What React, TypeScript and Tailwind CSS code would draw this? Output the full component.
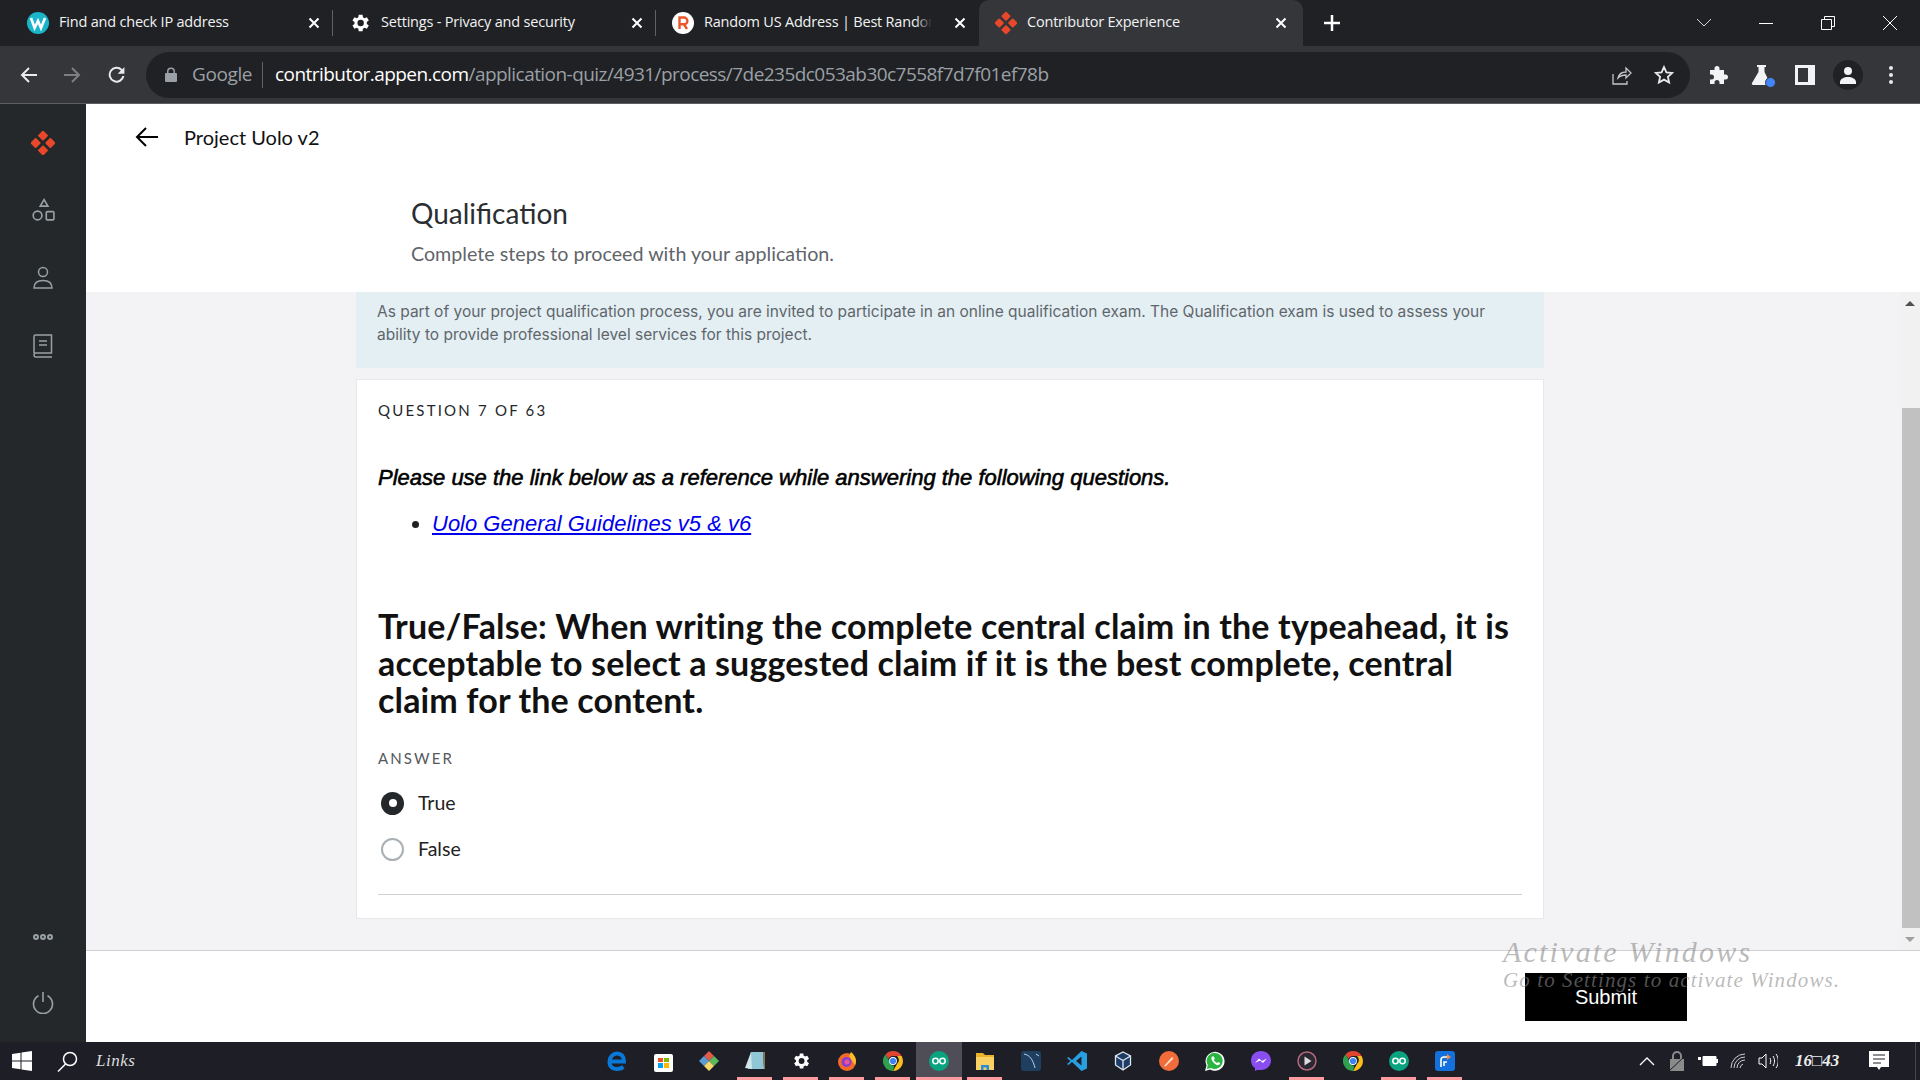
import React from "react";

const Diamond = ({ size = 20 }: { size?: number }) => (
  <svg width={size} height={size} viewBox="0 0 24 24" fill="#e8472a">
    <rect x="8.2" y="0.8" width="7.6" height="7.6" rx="1" transform="rotate(45 12 4.6)" />
    <rect x="8.2" y="15.6" width="7.6" height="7.6" rx="1" transform="rotate(45 12 19.4)" />
    <rect x="0.8" y="8.2" width="7.6" height="7.6" rx="1" transform="rotate(45 4.6 12)" />
    <rect x="15.6" y="8.2" width="7.6" height="7.6" rx="1" transform="rotate(45 19.4 12)" />
  </svg>
);

const TabClose = () => (
  <svg width="12" height="12" viewBox="0 0 12 12" stroke="#fff" strokeWidth="2" fill="none">
    <path d="M1.5 1.5l9 9M10.5 1.5l-9 9" />
  </svg>
);

const Gear = ({ size = 20, color = "#fff" }: { size?: number; color?: string }) => (
  <svg width={size} height={size} viewBox="0 0 24 24" fill={color}>
    <path d="M19.4 13a7.6 7.6 0 0 0 0-2l2.2-1.7-2.1-3.6-2.6 1a7.6 7.6 0 0 0-1.7-1L14.8 3h-4.2l-.4 2.7a7.6 7.6 0 0 0-1.7 1l-2.6-1-2.1 3.6L6 11a7.6 7.6 0 0 0 0 2l-2.2 1.7 2.1 3.6 2.6-1a7.6 7.6 0 0 0 1.7 1l.4 2.7h4.2l.4-2.7a7.6 7.6 0 0 0 1.7-1l2.6 1 2.1-3.6zM12.7 15.5a3.5 3.5 0 1 1 0-7 3.5 3.5 0 0 1 0 7z" />
  </svg>
);

const FavW = () => (
  <svg width="22" height="22" viewBox="0 0 22 22">
    <circle cx="11" cy="11" r="11" fill="#19b5c9" />
    <path d="M4 6l3.6 10 3.4-7 3 7L18 6" stroke="#fff" strokeWidth="2.6" fill="none" />
  </svg>
);

const FavR = () => (
  <svg width="22" height="22" viewBox="0 0 22 22">
    <circle cx="11" cy="11" r="11" fill="#fff" />
    <path d="M7.5 17V5.5h4.5a3.4 3.4 0 0 1 0 6.8H7.500M12 12.300L15 17" stroke="#e8562a" strokeWidth="2.400" fill="none" />
  </svg>
);

function Tab({ icon, title, active, sep, w, fade }: { icon: React.ReactNode; title: string; active?: boolean; sep?: boolean; w: number; fade?: boolean }) {
  return (
    <div className={active ? "relative h-[46px] flex items-center bg-[#35363a] rounded-t-[10px] pl-[16px] pr-[16px] shrink-0" : "relative h-[46px] flex items-center pl-[16px] pr-[13px] shrink-0"} style={{ width: w }}>
      <div className="w-[22px] h-[22px] flex items-center justify-center shrink-0">{icon}</div>
      <div className="ml-[10px] flex-1 min-w-0 overflow-hidden whitespace-nowrap text-[14.500px] leading-[20px] mb-[2px] tracking-[-0.2px] text-[#f1f3f4] font-['Open_Sans',sans-serif]">
        {title}
      </div>
      {fade ? <div className="absolute right-[30px] top-[10px] w-[34px] h-[26px] bg-gradient-to-r from-transparent via-[#202124] to-[#202124]" /> : null}
      <div className="ml-[8px] w-[12px] shrink-0"><TabClose /></div>
      {sep ? <div className="absolute right-0 top-[10px] h-[26px] w-px bg-[#5f6368]" /> : null}
    </div>
  );
}

function SideIcon({ children, mt }: { children: React.ReactNode; mt: string }) {
  return <div className={`flex justify-center ${mt}`}>{children}</div>;
}

const S = "#9aa0a3";

function TaskItem({ children, mark, active }: { children: React.ReactNode; mark?: boolean; active?: boolean }) {
  return (
    <div className={active ? "relative w-[46px] h-[38px] flex items-center justify-center bg-[#4f4e58]" : "relative w-[46px] h-[38px] flex items-center justify-center"}>
      {children}
      {mark ? <div className={active ? "absolute bottom-0 left-0 right-0 h-[3px] bg-[#ff9a9e]" : "absolute bottom-0 left-[5px] w-[35px] h-[3px] bg-[#ff9a9e]"} /> : null}
    </div>
  );
}

const ChromeLogo = () => (
  <svg width="20" height="20" viewBox="0 0 20 20">
    <path d="M10 0a10 10 0 0 1 8.660 5H10a5 5 0 0 0-4.600 3L2.500 3.400A10 10 0 0 1 10 0z" fill="#e0452f" />
    <path d="M18.660 5A10 10 0 0 1 10 20l4.300-7.500A5 5 0 0 0 14 5z" fill="#f9bd1c" />
    <path d="M10 20A10 10 0 0 1 2.500 3.400L6.800 11a5 5 0 0 0 4.500 3.800z" fill="#2fa04f" />
    <circle cx="10" cy="10" r="3.900" fill="#fff" />
    <circle cx="10" cy="10" r="3.100" fill="#3b82f6" />
  </svg>
);

const GoLogo = () => (
  <svg width="20" height="20" viewBox="0 0 20 20">
    <circle cx="10" cy="10" r="10" fill="#0aa37f" />
    <circle cx="6.500" cy="10" r="2.700" fill="none" stroke="#fff" strokeWidth="1.500" />
    <circle cx="13.500" cy="10" r="2.700" fill="none" stroke="#fff" strokeWidth="1.500" />
  </svg>
);

export default function App() {
  return (
    <div className="relative w-[1920px] h-[1080px] flex flex-col overflow-hidden bg-white font-['Inter',sans-serif]">
      {/* tab strip */}
      <div className="h-[46px] bg-[#202124] flex items-center shrink-0">
        <div className="w-[11px] shrink-0" />
        <Tab w={322} sep icon={<FavW />} title="Find and check IP address" />
        <Tab w={323} sep icon={<Gear size={24} />} title="Settings - Privacy and security" />
        <Tab w={323} fade icon={<FavR />} title="Random US Address | Best Random Address" />
        <Tab active w={324} icon={<Diamond size={24} />} title="Contributor Experience" />
        <svg className="ml-[21px]" width="16" height="16" viewBox="0 0 16 16" stroke="#fff" strokeWidth="2.500" fill="none"><path d="M8 0v16M0 8h16" /></svg>
        <div className="flex-1" />
        <svg className="mr-[47px]" width="16" height="10" viewBox="0 0 16 10" stroke="#d5d5d5" fill="none"><path d="M1 1l7 7 7-7" /></svg>
        <div className="w-[14px] h-px bg-white mr-[48px]" />
        <svg className="mr-[48px]" width="14" height="14" viewBox="0 0 14 14" stroke="#fff" fill="none"><path d="M.5 3.500h10v10H.5zM3.500 3.500v-3h10v10h-3" /></svg>
        <svg className="mr-[23px]" width="14" height="14" viewBox="0 0 14 14" stroke="#fff" fill="none"><path d="M0 0l14 14M14 0L0 14" /></svg>
      </div>

      {/* toolbar */}
      <div className="h-[58px] bg-[#35363a] border-b border-[#5c5d60] flex items-center shrink-0">
        <svg className="ml-[20px]" width="18" height="18" viewBox="0 0 18 18" stroke="#e8eaed" strokeWidth="2" fill="none"><path d="M17 9H2M9 2L2 9l7 7" /></svg>
        <svg className="ml-[25px]" width="18" height="18" viewBox="0 0 18 18" stroke="#7d7f82" strokeWidth="2" fill="none"><path d="M1 9h15M9 2l7 7-7 7" /></svg>
        <svg className="ml-[26px]" width="19" height="19" viewBox="0 0 24 24" fill="#e8eaed"><path d="M19.300 5.300A10 10 0 1 0 22 14h-2.600a7.500 7.500 0 1 1-1.900-7L13.500 11H22V2.500z" /></svg>
        <div className="ml-[20px] w-[1544px] h-[46px] rounded-full bg-[#202124] flex items-center">
          <svg className="ml-[19px]" width="12" height="15" viewBox="0 0 12 15" fill="#9aa0a6"><path d="M2 6V4.500a4 4 0 0 1 8 0V6h1a1 1 0 0 1 1 1v7a1 1 0 0 1-1 1H1a1 1 0 0 1-1-1V7a1 1 0 0 1 1-1zm1.500 0h5V4.500a2.500 2.500 0 0 0-5 0z" /></svg>
          <span className="ml-[15px] mb-[1px] text-[19px] text-[#9aa0a6] font-['Open_Sans',sans-serif] tracking-[-0.4px]">Google</span>
          <div className="ml-[10px] w-px h-[26px] bg-[#5f6368]" />
          <span className="ml-[12px] mb-[1px] text-[19px] font-['Open_Sans',sans-serif] tracking-[-0.55px] whitespace-nowrap text-[#9aa0a6]">
            <span className="text-white">contributor.appen.com</span>/application-quiz/4931/process/7de235dc053ab30c7558f7d7f01ef78b
          </span>
          <div className="flex-1" />
          <svg className="mr-[22px]" width="20" height="20" viewBox="0 0 20 20" stroke="#c4c7c9" strokeWidth="1.300" fill="none"><path d="M1 9v10h14v-3M6 13c1-4 4-6 8-6V3l5 5-5 5v-3c-3 0-6 1-8 3z" /></svg>
          <svg className="mr-[16px]" width="20" height="20" viewBox="0 0 20 20" stroke="#e8eaed" strokeWidth="1.800" fill="none"><path d="M10 2l2.400 5.300 5.800.6-4.300 3.900 1.200 5.700L10 14.600l-5.100 2.900 1.200-5.700L1.800 7.900l5.800-.6z" /></svg>
        </div>
        <svg className="ml-[19px]" width="20" height="20" viewBox="0 0 20 20" fill="#f1f3f4"><path d="M8 1a2.500 2.500 0 0 1 2.500 2.500V5H15v4.500h1.500a2.500 2.500 0 0 1 0 5H15V19h-4.500v-1.500a2.500 2.500 0 0 0-5 0V19H1v-4.500h1.500a2.500 2.500 0 0 0 0-5H1V5h4.500V3.500A2.500 2.500 0 0 1 8 1z" /></svg>
        <div className="relative ml-[22px] w-[20px] h-[20px]">
          <svg width="20" height="20" viewBox="0 0 20 20" fill="#f1f3f4"><path d="M6 0h9v2h-1.500v5L19 18a1.500 1.500 0 0 1-1.400 2H2.400A1.500 1.500 0 0 1 1 18l6.500-11V2H6z" /></svg>
          <div className="absolute right-[-5px] bottom-[-3px] w-[9px] h-[9px] rounded-full bg-[#4285f4] border border-[#35363a] box-content" />
        </div>
        <div className="ml-[24px] w-[20px] h-[20px] bg-[#f1f3f4] flex items-center pl-[3px]">
          <div className="w-[10px] h-[14px] bg-[#35363a]" />
        </div>
        <div className="ml-[18px] w-[30px] h-[30px] rounded-full bg-[#202124] flex items-center justify-center">
          <svg width="18" height="18" viewBox="0 0 18 18" fill="#f1f3f4"><circle cx="9" cy="5" r="4" /><path d="M1 18v-2c0-3 4-5 8-5s8 2 8 5v2z" /></svg>
        </div>
        <div className="ml-[26px] flex flex-col gap-[3px]">
          <div className="w-[4px] h-[4px] rounded-full bg-[#e8eaed]" />
          <div className="w-[4px] h-[4px] rounded-full bg-[#e8eaed]" />
          <div className="w-[4px] h-[4px] rounded-full bg-[#e8eaed]" />
        </div>
      </div>

      {/* app */}
      <div className="flex-1 min-h-0 flex">
        <aside className="w-[86px] shrink-0 bg-[#24282b] flex flex-col">
          <SideIcon mt="mt-[27px]"><Diamond size={24} /></SideIcon>
          <SideIcon mt="mt-[43px]">
            <svg width="24" height="24" viewBox="0 0 22 22" stroke={S} strokeWidth="1.500" fill="none">
              <path d="M12 1.500l3.500 6h-7z" /><circle cx="6" cy="16" r="4" /><rect x="14" y="12.500" width="7" height="7.500" rx="1" />
            </svg>
          </SideIcon>
          <SideIcon mt="mt-[44px]">
            <svg width="22" height="24" viewBox="0 0 22 24" stroke={S} strokeWidth="1.500" fill="none">
              <circle cx="11" cy="6" r="4.500" /><path d="M2 22c0-5 3.500-7.500 9-7.500S20 17 20 22z" />
            </svg>
          </SideIcon>
          <SideIcon mt="mt-[44px]">
            <svg width="20" height="24" viewBox="0 0 20 24" stroke={S} strokeWidth="1.500" fill="none">
              <path d="M1 19V2.500A1.500 1.500 0 0 1 2.500 1h16v18H3a2 2 0 0 0 0 4h16M6 7h8M6 11h8" />
            </svg>
          </SideIcon>
          <div className="flex-1" />
          <div className="flex justify-center gap-[1px] mb-[52px]">
            <div className="w-[6px] h-[6px] rounded-full border-2 border-[#9aa0a3]" />
            <div className="w-[6px] h-[6px] rounded-full border-2 border-[#9aa0a3]" />
            <div className="w-[6px] h-[6px] rounded-full border-2 border-[#9aa0a3]" />
          </div>
          <SideIcon mt="mb-[28px]">
            <svg width="22" height="22" viewBox="0 0 22 22" stroke={S} strokeWidth="1.600" fill="none">
              <path d="M6.500 3.700a9.500 9.500 0 1 0 9 0M11 0v10" />
            </svg>
          </SideIcon>
        </aside>

        <main className="flex-1 min-w-0 flex flex-col">
          {/* header */}
          <header className="h-[188px] shrink-0 bg-white pt-[21px]">
            <div className="flex items-center h-[24px]">
              <svg className="ml-[49px]" width="23" height="20" viewBox="0 0 23 20" stroke="#000" strokeWidth="2" fill="none"><path d="M23 10H2M11 1l-9 9 9 9" /></svg>
              <span className="ml-[26px] text-[20px] text-[#111] font-['Lato',sans-serif]">Project Uolo v2</span>
            </div>
            <h1 className="ml-[325px] mt-[46px] text-[28px] leading-[36px] text-[#2a2e31] font-['Lato',sans-serif]">Qualification</h1>
            <p className="ml-[325px] mt-[10px] text-[19.700px] leading-[26px] text-[#5f6569] font-['Lato',sans-serif]">Complete steps to proceed with your application.</p>
          </header>

          {/* body */}
          <div className="relative flex-1 min-h-0 bg-[#f3f3f5] flex border-b border-[#d0d0d3]">
            <div className="flex-1 min-w-0 pl-[270px]">
              <div className="w-[1188px] h-[76px] bg-[#e4eff4] px-[21px] pt-[9px] text-[15.500px] leading-[22.500px] text-[#5f666b] font-['Inter',sans-serif]">
                As part of your project qualification process, you are invited to participate in an online qualification exam. The Qualification exam is used to assess your ability to provide professional level services for this project.
              </div>
              <section className="mt-[11px] w-[1188px] h-[540px] bg-white border border-[#e8e8ea] px-[21px] pt-[20px]">
                <div className="text-[15px] leading-[20px] tracking-[2.200px] text-[#24282b] font-['Lato',sans-serif]">QUESTION 7 OF 63</div>
                <p className="mt-[44px] text-[22px] leading-[28px] italic text-black font-['Liberation_Sans',sans-serif] [-webkit-text-stroke:0.6px_black]">
                  Please use the link below as a reference while answering the following questions.
                </p>
                <ul className="mt-[18px] pl-[54px] list-disc text-[22px] leading-[28px] italic font-['Liberation_Sans',sans-serif]">
                  <li className="marker:text-[#222]">
                    <a className="text-[#0000ee] underline">Uolo General Guidelines v5 &amp; v6</a>
                  </li>
                </ul>
                <h2 className="mt-[69px] text-[34px] leading-[37px] font-bold tracking-[0.15px] text-[#111] font-['Lato',sans-serif]">
                  True/False: When writing the complete central claim in the typeahead, it is acceptable to select a suggested claim if it is the best complete, central claim for the content.
                </h2>
                <div className="mt-[30px] text-[15px] leading-[20px] tracking-[2.100px] text-[#55595c] font-['Lato',sans-serif]">ANSWER</div>
                <div className="mt-[23px] flex items-center h-[24px]">
                  <div className="ml-[3px] w-[23px] h-[23px] rounded-full bg-[#24282b] flex items-center justify-center">
                    <div className="w-[8px] h-[8px] rounded-full bg-white" />
                  </div>
                  <span className="ml-[14px] text-[19.500px] text-[#222] font-['Lato',sans-serif]">True</span>
                </div>
                <div className="mt-[22px] flex items-center h-[24px]">
                  <div className="ml-[3px] w-[23px] h-[23px] rounded-full border-2 border-[#a9afb3] bg-white" />
                  <span className="ml-[14px] text-[19.500px] text-[#222] font-['Lato',sans-serif]">False</span>
                </div>
                <div className="mt-[33px] h-px bg-[#d0d0d3]" />
              </section>
            </div>
            <div className="w-[20px] shrink-0 bg-[#f1f1f1] flex flex-col">
              <div className="h-[22px] flex items-center justify-center">
                <div className="w-0 h-0 border-x-[5px] border-x-transparent border-b-[5px] border-b-[#505050]" />
              </div>
              <div className="h-[94px]" />
              <div className="flex-1 ml-[2px] bg-[#c1c1c1]" />
              <div className="h-[22px] flex items-center justify-center">
                <div className="w-0 h-0 border-x-[5px] border-x-transparent border-t-[5px] border-t-[#a0a0a0]" />
              </div>
            </div>
          </div>

          {/* footer */}
          <footer className="h-[91px] shrink-0 bg-white flex items-start justify-end pt-[22px] pr-[233px]">
            <button className="w-[162px] h-[48px] bg-black text-white text-[20px] leading-[48px] font-['Liberation_Sans',sans-serif]">Submit</button>
          </footer>
        </main>
      </div>

      {/* taskbar */}
      <div className="h-[38px] shrink-0 bg-[#1d1e26] flex items-center text-white">
        <svg className="ml-[12px]" width="20" height="20" viewBox="0 0 20 20" fill="#fff"><path d="M0 3l8.500-1.200v7.600H0zM9.500 1.600L20 0v9.400H9.500zM0 10.500h8.500v7.700L0 17zM9.500 10.500H20V20L9.500 18.400z" /></svg>
        <svg className="ml-[25px]" width="21" height="21" viewBox="0 0 21 21" stroke="#fff" strokeWidth="1.500" fill="none"><circle cx="13" cy="8" r="6.500" /><path d="M8.500 13L1 20.500" /></svg>
        <span className="ml-[18px] text-[17px] italic tracking-[0.5px] text-[#ddd] font-['Liberation_Serif',serif]">Links</span>

        <div className="ml-[459px] flex">
          <TaskItem>
            <svg width="20" height="20" viewBox="0 0 20 20" fill="none" stroke="#0a78d7" strokeWidth="4"><path d="M3 10.500h14C17 5 14 2.500 10 2.500 6 2.500 2.500 6 2.500 11s3.500 7 7.500 7c3 0 5-1 6.500-2" /></svg>
          </TaskItem>
          <TaskItem>
            <div className="relative w-[19px] h-[18px] bg-white rounded-[2px] mt-[3px] grid grid-cols-2 gap-px p-[4px]">
              <div className="bg-[#f25022]" /><div className="bg-[#7fba00]" /><div className="bg-[#00a4ef]" /><div className="bg-[#ffb900]" />
            </div>
          </TaskItem>
          <TaskItem>
            <svg width="20" height="20" viewBox="0 0 20 20"><path d="M10 0l5 5-5 5-5-5z" fill="#e05a4a" /><path d="M15 5l5 5-5 5-5-5z" fill="#5cb85c" /><path d="M5 5l5 5-5 5-5-5z" fill="#5b9bd5" /><path d="M10 10l5 5-5 5-5-5z" fill="#f5d76e" /></svg>
          </TaskItem>
          <TaskItem mark>
            <svg width="20" height="20" viewBox="0 0 20 20"><path d="M6 1h12l1 17H3z" fill="#8fc7d4" /><path d="M0 17L6 1l1 17z" fill="#cfe6ea" /><path d="M18 1h2v17h-1z" fill="#8a7a5a" /></svg>
          </TaskItem>
          <TaskItem mark><Gear size={20} /></TaskItem>
          <TaskItem mark>
            <svg width="20" height="20" viewBox="0 0 20 20"><circle cx="10" cy="11" r="9" fill="#f2692a" /><path d="M14 1c5 4 6 9 4 13L12 5z" fill="#fbbc2c" /><circle cx="9.500" cy="11" r="5" fill="#8a3ed0" /><circle cx="10" cy="11" r="2.500" fill="#e8559b" /></svg>
          </TaskItem>
          <TaskItem mark><ChromeLogo /></TaskItem>
          <TaskItem mark active><GoLogo /></TaskItem>
          <TaskItem mark>
            <svg width="20" height="18" viewBox="0 0 20 18"><path d="M1 1h7l2 2h9v3H1z" fill="#e9b32a" /><rect x="1" y="5" width="18" height="13" fill="#fad165" /><path d="M6 18v-5h8v5h-2.500v-2.500h-3V18z" fill="#2a8fd8" /></svg>
          </TaskItem>
          <TaskItem>
            <svg width="20" height="20" viewBox="0 0 20 20"><rect width="20" height="20" rx="3" fill="#1e3f5f" /><path d="M3 3c6 1 9 6 11 14M15 3l3 2" stroke="#b9d2e6" strokeWidth="1" fill="none" /></svg>
          </TaskItem>
          <TaskItem>
            <svg width="20" height="20" viewBox="0 0 20 20"><path d="M14.500 0L20 2.500v15L14.500 20 5 11l-3.500 3L0 13l3.500-3L0 7l1.500-1L5 9zM14.500 5.500L9 10l5.500 4.500z" fill="#2a9fe0" /></svg>
          </TaskItem>
          <TaskItem>
            <svg width="20" height="20" viewBox="0 0 20 20" stroke="#dfe7ef" strokeWidth="1.300"><path d="M10 1l7.500 4v9L10 19l-7.500-5V5z" fill="#1d3b66" /><path d="M2.500 5l7.500 4.500L17.500 5M10 9.500V19" fill="none" /></svg>
          </TaskItem>
          <TaskItem>
            <svg width="20" height="20" viewBox="0 0 20 20"><circle cx="10" cy="10" r="10" fill="#f26b3a" /><path d="M5 15l8-9 1.500 1.500-8 8z" fill="#fde0d2" /></svg>
          </TaskItem>
          <TaskItem>
            <svg width="20" height="20" viewBox="0 0 20 20"><path d="M0 20l1.500-5.500A9.500 9.500 0 1 1 5.200 18.500z" fill="#fff" /><path d="M1.800 18l1-4A8 8 0 1 1 6 17z" fill="#2ab540" /><path d="M7 5.500c-1 1-1 3 1 5.500s4 3.500 5.500 3 1.800-1.500 1.500-2l-2-1-1 1c-1-.3-2.800-2-3.200-3.200l1-1-1-2.300z" fill="#fff" /></svg>
          </TaskItem>
          <TaskItem>
            <svg width="20" height="20" viewBox="0 0 20 20"><path d="M10 0c5.700 0 10 4 10 9.500S15.700 19 10 19H6l-2 1v-3C1.500 15.500 0 12.700 0 9.500 0 4 4.300 0 10 0z" fill="#8a4df0" /><path d="M4 12l4-4.500 3 2.500 5-2.500-4 4.500-3-2.500z" fill="#fff" /></svg>
          </TaskItem>
          <TaskItem mark>
            <svg width="20" height="20" viewBox="0 0 20 20"><circle cx="10" cy="10" r="9" fill="#2b2833" stroke="#b46a7a" strokeWidth="1.500" /><path d="M7.500 5.500l7 4.500-7 4.500z" fill="#ddd" /></svg>
          </TaskItem>
          <TaskItem><ChromeLogo /></TaskItem>
          <TaskItem mark><GoLogo /></TaskItem>
          <TaskItem mark>
            <svg width="20" height="20" viewBox="0 0 20 20"><rect width="20" height="20" rx="3" fill="#1470dc" /><path d="M6 16V9a3 3 0 0 1 3-3h3M9 15v-4h3" stroke="#fff" strokeWidth="1.600" fill="none" /><path d="M12 3l4 3-4 3z" fill="#f5883a" /></svg>
          </TaskItem>
        </div>

        <div className="flex-1" />
        <svg className="mr-[14px]" width="16" height="9" viewBox="0 0 16 9" stroke="#fff" strokeWidth="1.300" fill="none"><path d="M1 8l7-7 7 7" /></svg>
        <svg className="mr-[13px]" width="16" height="20" viewBox="0 0 16 20"><path d="M4 8V5a4 4 0 0 1 8 0v3" fill="none" stroke="#8a8a8a" strokeWidth="2" /><rect x="1" y="8" width="14" height="12" fill="#8a8a8a" /><path d="M0 20L16 5" stroke="#1d1e26" strokeWidth="1" /></svg>
        <svg className="mr-[12px]" width="20" height="12" viewBox="0 0 20 12"><path d="M5 1.500h13v9H5z" fill="#fff" stroke="#fff" /><rect x="18" y="4" width="2" height="4" fill="#fff" /><path d="M0 2h3v3H0z" fill="#fff" /></svg>
        <svg className="mr-[12px]" width="16" height="16" viewBox="0 0 16 16" stroke="#cfcfcf" fill="none"><path d="M1 15A14 14 0 0 1 15 1M4 15A11 11 0 0 1 15 4M7 15a8 8 0 0 1 8-8M10 15a5 5 0 0 1 3-4" /></svg>
        <svg className="mr-[17px]" width="20" height="16" viewBox="0 0 20 16" stroke="#fff" fill="none"><path d="M1 5h3l4-4v14l-4-4H1zM12 5c1 2 1 4 0 6M15 3c2 3 2 7 0 10M18 1c3 4 3 10 0 14" /></svg>
        <span className="w-[58px] mr-[16px] whitespace-nowrap text-[17px] italic font-bold text-[#eee] font-['Liberation_Serif',serif]">16□43</span>
        <svg className="mr-[26px]" width="20" height="20" viewBox="0 0 20 20"><path d="M0 0h20v16h-8l-2 3-2-3H0z" fill="#fff" /><path d="M4 4h12M4 8h12M4 12h8" stroke="#1d1e26" /></svg>
        <div className="w-px h-[38px] bg-[#45464d] mr-[4px]" />
      </div>

      {/* Windows watermark */}
      <div className="absolute left-[1503px] top-[934px] pointer-events-none italic text-[#8c8c8c]/60 font-['Liberation_Serif',serif] whitespace-nowrap">
        <div className="text-[30px] leading-[36px] tracking-[2.200px]">Activate Windows</div>
        <div className="text-[21px] leading-[20px] tracking-[1.100px]">Go to Settings to activate Windows.</div>
      </div>
    </div>
  );
}
